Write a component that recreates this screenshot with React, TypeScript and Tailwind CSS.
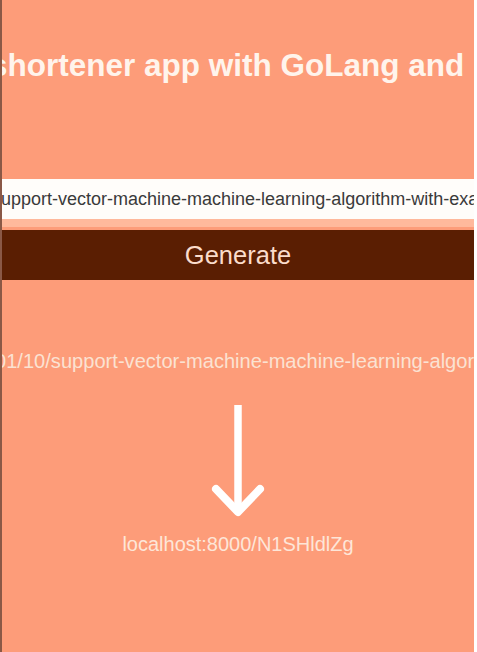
import React from "react";

export default function App() {
  const font = { fontFamily: '"Liberation Sans", Arial, sans-serif' };
  return (
    <div className="w-[477px] h-[652px] flex overflow-hidden bg-white" style={font}>
      <div className="w-[2px] bg-[#8a5846] shrink-0" />
      <div className="flex-1 min-w-0 bg-[#fd9c79] flex flex-col overflow-hidden">
        <div className="pt-[47px] flex">
          <h1 className="shrink-0 -ml-[12px] whitespace-nowrap text-[31.5px] leading-[36px] font-bold text-[#fff4ec]">
            shortener app with GoLang and React
          </h1>
        </div>
        <div className="mt-[96px] flex flex-col">
          <div className="h-[40px] bg-[#fffdfa] flex overflow-hidden">
            <span className="shrink-0 -ml-[10px] whitespace-nowrap text-[18px] leading-[40px] text-[#3a3a3a]">
              support-vector-machine-machine-learning-algorithm-with-example-and-code/
            </span>
          </div>
          <div className="h-[8px] bg-[#ffb99c]" />
          <div className="h-[3px]" />
          <button className="h-[50px] bg-[#5a1e02] text-[25.5px] text-[#fbdccb] flex items-center justify-center">
            Generate
          </button>
        </div>
        <div className="mt-[69px] flex">
          <span className="shrink-0 -ml-[7px] whitespace-nowrap text-[20.1px] leading-[24px] text-[#fbe2d2]">
            01/10/support-vector-machine-machine-learning-algorithm-with-example-and-code/
          </span>
        </div>
        <div className="mt-[32px] flex justify-center">
          <svg width="64" height="114" viewBox="0 0 64 114" fill="none">
            <line x1="32" y1="0" x2="32" y2="106" stroke="white" strokeWidth="7.5" />
            <polyline points="10,84 32,107 54,84" stroke="white" strokeWidth="8" strokeLinecap="round" strokeLinejoin="round" fill="none" />
          </svg>
        </div>
        <div className="mt-[13px] flex justify-center">
          <span className="whitespace-nowrap text-[20px] leading-[24px] text-[#fde6d8]">
            localhost:8000/N1SHldlZg
          </span>
        </div>
      </div>
      <div className="w-[3px] bg-white shrink-0" />
    </div>
  );
}
